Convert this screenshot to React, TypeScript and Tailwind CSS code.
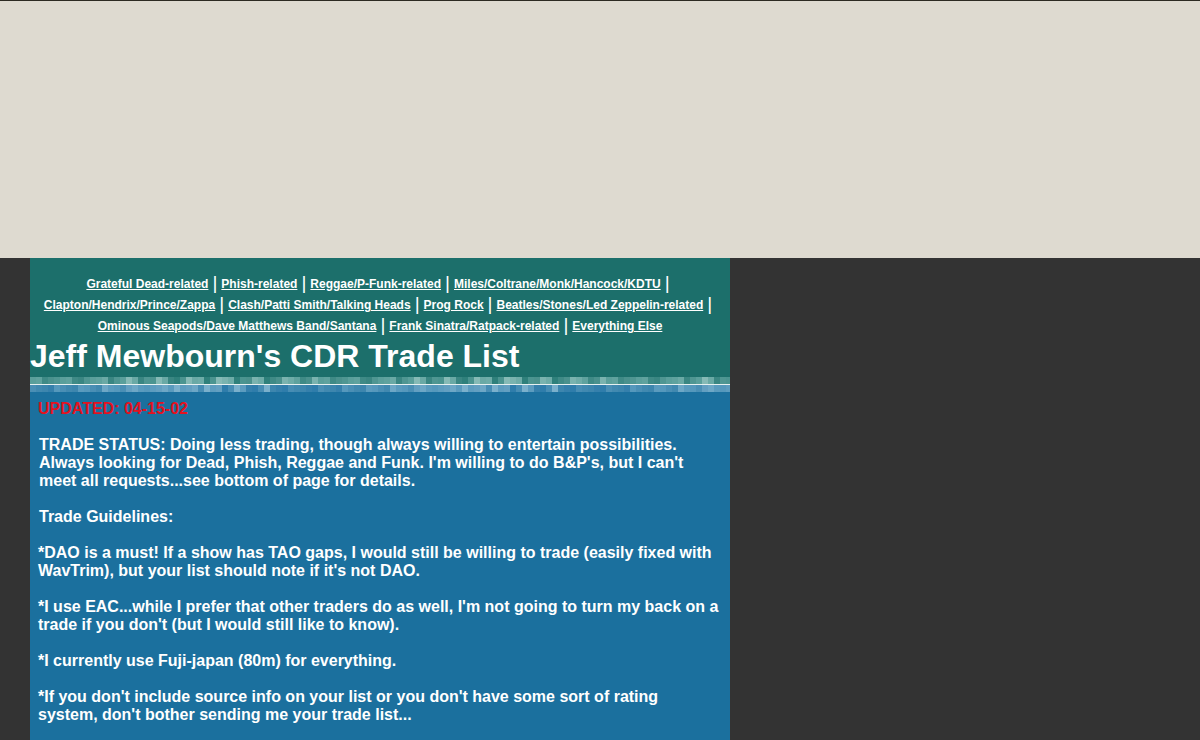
import React from 'react'

const navRows: string[][] = [
  ['Grateful Dead-related', 'Phish-related', 'Reggae/P-Funk-related', 'Miles/Coltrane/Monk/Hancock/KDTU'],
  ['Clapton/Hendrix/Prince/Zappa', 'Clash/Patti Smith/Talking Heads', 'Prog Rock', 'Beatles/Stones/Led Zeppelin-related'],
  ['Ominous Seapods/Dave Matthews Band/Santana', 'Frank Sinatra/Ratpack-related', 'Everything Else'],
]

// pixelated border strip, block colors
const tealBlocks = [
  'bg-[#5a9f9b]', 'bg-[#4b9490]', 'bg-[#3f8a86]', 'bg-[#6aa9a5]', 'bg-[#7ab3af]', 'bg-[#4f9692]',
  'bg-[#2f807b]', 'bg-[#5fa29e]', 'bg-[#86bab6]', 'bg-[#4a918d]', 'bg-[#3a8682]', 'bg-[#6eaca8]',
]
const blueBlocks = [
  'bg-[#4a8fb5]', 'bg-[#5c9cbf]', 'bg-[#3d86ae]', 'bg-[#6da7c6]', 'bg-[#2f7dab]', 'bg-[#5598bc]',
  'bg-[#7ab0cc]', 'bg-[#4189b0]', 'bg-[#639fc1]', 'bg-[#3580ac]', 'bg-[#5a9bbe]', 'bg-[#478db4]',
]

const Strip: React.FC<{ blocks: string[] }> = ({ blocks }) => (
  <div className="flex h-[7px] overflow-hidden">
    {Array.from({ length: 120 }).map((_, i) => (
      <div key={i} className={`w-[6px] shrink-0 ${blocks[(i * 7 + (i >> 2)) % blocks.length]}`} />
    ))}
  </div>
)

export default function App() {
  return (
    <div className="min-h-[740px] bg-[#333333] font-['Liberation_Sans',Arial,sans-serif]">
      <div className="h-[258px] bg-[#dedad0] border-t border-[#2c2a22]" />
      <div className="w-[700px] ml-[30px]">
        <div className="bg-[#1c6f6b] pt-[16px] pb-[2px]">
          <div className="text-center text-white text-[12px] font-bold leading-[21px]">
            {navRows.map((row, r) => (
              <div key={r} className="h-[21px]">
                {row.map((label, i) => (
                  <React.Fragment key={label}>
                    <a href="#" className="underline">{label}</a>
                    {(r < 2 || i < row.length - 1) && (
                      <span className="font-normal text-[19px] leading-[16px] mx-[4px] align-[-1px]">|</span>
                    )}
                  </React.Fragment>
                ))}
              </div>
            ))}
          </div>
          <h1 className="text-white text-[32px] font-bold leading-[38px]">Jeff Mewbourn's CDR Trade List</h1>
        </div>
        <div className="bg-[#1c6f6b]">
          <Strip blocks={tealBlocks} />
        </div>
        <div className="h-px bg-[#e6f0f0]" />
        <Strip blocks={blueBlocks} />
        <div className="bg-[#1b709e] text-white text-[16px] font-bold leading-[18px] px-[8px] pt-[8px] pb-[20px]">
          <p className="text-[#e3121e]">UPDATED: 04-15-02</p>
          <br />
          <p className="pl-px">TRADE STATUS: Doing less trading, though always willing to entertain possibilities. Always looking for Dead, Phish, Reggae and Funk. I'm willing to do B&amp;P's, but I can't meet all requests...see bottom of page for details.</p>
          <br />
          <p className="pl-px">Trade Guidelines:</p>
          <br />
          <p>*DAO is a must! If a show has TAO gaps, I would still be willing to trade (easily fixed with WavTrim), but your list should note if it's not DAO.</p>
          <br />
          <p>*I use EAC...while I prefer that other traders do as well, I'm not going to turn my back on a trade if you don't (but I would still like to know).</p>
          <br />
          <p>*I currently use Fuji-japan (80m) for everything.</p>
          <br />
          <p>*If you don't include source info on your list or you don't have some sort of rating system, don't bother sending me your trade list...</p>
          <br />
        </div>
      </div>
    </div>
  )
}
